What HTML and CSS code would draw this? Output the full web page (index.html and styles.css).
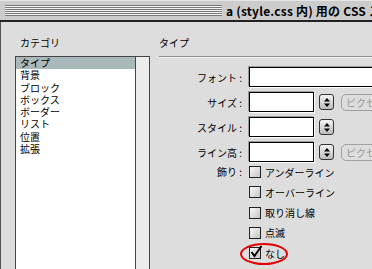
FILE: index.html
```html
<!DOCTYPE html>
<html lang="ja">
<head>
    <meta charset="UTF-8">
    <meta name="viewport" content="width=device-width, initial-scale=1.0">
    <title>CSS スタイル定義</title>
    <link rel="stylesheet" href="styles.css">
</head>
<body>
    <div class="window">
        <div class="titlebar">
            <div class="stripes"></div>
            <div class="title">a (style.css 内) 用の CSS スタイル定義</div>
        </div>

        <div class="content">
            <div class="category">
                <div class="heading">カテゴリ</div>
                <div class="listbox">
                    <ul class="list">
                        <li class="selected">タイプ</li>
                        <li>背景</li>
                        <li>ブロック</li>
                        <li>ボックス</li>
                        <li>ボーダー</li>
                        <li>リスト</li>
                        <li>位置</li>
                        <li>拡張</li>
                    </ul>
                    <div class="scrollbar"></div>
                </div>
            </div>

            <div class="panel">
                <div class="heading">タイプ</div>
                <div class="groove"></div>

                <div class="row">
                    <label class="label">フォント :</label>
                    <div class="field wide"></div>
                </div>
                <div class="row">
                    <label class="label">サイズ :</label>
                    <div class="field"></div>
                    <div class="stepper">
                        <svg width="8" height="11" viewBox="0 0 8 11"><path d="M4 1 L7 4.5 L1 4.5 Z M1 6.5 L7 6.5 L4 10 Z" fill="#000"/></svg>
                    </div>
                    <div class="unit">ピクセル</div>
                </div>
                <div class="row">
                    <label class="label">スタイル :</label>
                    <div class="field"></div>
                    <div class="stepper">
                        <svg width="8" height="11" viewBox="0 0 8 11"><path d="M4 1 L7 4.5 L1 4.5 Z M1 6.5 L7 6.5 L4 10 Z" fill="#000"/></svg>
                    </div>
                </div>
                <div class="row">
                    <label class="label">ライン高 :</label>
                    <div class="field"></div>
                    <div class="stepper">
                        <svg width="8" height="11" viewBox="0 0 8 11"><path d="M4 1 L7 4.5 L1 4.5 Z M1 6.5 L7 6.5 L4 10 Z" fill="#000"/></svg>
                    </div>
                    <div class="unit">ピクセル</div>
                </div>

                <div class="deco">
                    <label class="label deco-label">飾り :</label>
                    <div class="checks">
                        <div class="check"><span class="box"></span>アンダーライン</div>
                        <div class="check"><span class="box"></span>オーバーライン</div>
                        <div class="check"><span class="box"></span>取り消し線</div>
                        <div class="check"><span class="box"></span>点滅</div>
                        <div class="check">
                            <span class="box">
                                <svg class="tick" width="14" height="14" viewBox="0 0 14 14"><path d="M2.5 7 L5.5 11 L12.5 1" fill="none" stroke="#000" stroke-width="2"/></svg>
                            </span>なし
                            <span class="circle"></span>
                        </div>
                    </div>
                </div>
            </div>
        </div>
    </div>
</body>
</html>
```

FILE: styles.css
```css
body {
    margin: 0;
    padding: 0;
    width: 372px;
    height: 269px;
    overflow: hidden;
    font-family: "Noto Sans CJK JP", sans-serif;
    font-size: 10px;
    color: #000;
    background-color: #dddddd;
}

.window {
    height: 269px;
    display: flex;
    flex-direction: column;
}

.titlebar {
    flex-shrink: 0;
    display: flex;
    align-items: center;
    background-color: #cccccc;
    border-top: 1px solid #e6e6e6;
    border-bottom: 2px solid #222;
    box-sizing: border-box;
    height: 22px;
    padding-left: 5px;
    overflow: hidden;
}

.stripes {
    flex-shrink: 0;
    width: 217px;
    height: 11px;
    background: repeating-linear-gradient(to bottom, #7a7a7a 0, #7a7a7a 1px, #f2f2f2 1px, #f2f2f2 2px);
}

.title {
    margin-left: 4px;
    white-space: nowrap;
    font-size: 12px;
    font-weight: bold;
    letter-spacing: 0.2px;
}

.content {
    flex: 1;
    display: flex;
    border-left: 1px solid #555;
    min-height: 0;
}

.heading {
    padding-top: 15px;
    line-height: 12px;
    height: 12px;
    margin-bottom: 7px;
}

.category {
    flex-shrink: 0;
    margin-left: 14px;
    width: 135px;
    display: flex;
    flex-direction: column;
}

.category .heading {
    padding-left: 5px;
}

.listbox {
    flex: 1;
    display: flex;
    border: 1px solid #444;
    border-bottom: none;
}

.list {
    flex: 1;
    margin: 0;
    padding: 0;
    list-style: none;
    background-color: #fff;
    border-right: 1px solid #444;
}

.list li {
    line-height: 12.3px;
    padding-left: 4px;
    white-space: nowrap;
}

.list li.selected {
    background-color: #a9b8b8;
}

.scrollbar {
    width: 13px;
    background-color: #ececec;
}

.panel {
    flex: 1;
    min-width: 0;
    margin-left: 9px;
    overflow: hidden;
}

.groove {
    height: 1px;
    background-color: #8c8c8c;
    border-bottom: 1px solid #f4f4f4;
    margin-bottom: 9px;
}

.row {
    display: flex;
    align-items: center;
    height: 20px;
    margin-bottom: 5px;
    padding-left: 1px;
}

.label {
    width: 82px;
    margin-right: 7px;
    text-align: right;
    flex-shrink: 0;
    white-space: nowrap;
}

.field {
    width: 63px;
    height: 18px;
    background-color: #fff;
    border: 1px solid #000;
    box-shadow: -1px -1px 0 #9a9a9a, 1px 1px 0 #fff;
    flex-shrink: 0;
}

.field.wide {
    width: 200px;
}

.stepper {
    margin-left: 5px;
    width: 13px;
    height: 14px;
    border: 1px solid #333;
    border-radius: 3px;
    background: linear-gradient(to bottom, #f4f4f4, #bcbcbc);
    display: flex;
    align-items: center;
    justify-content: center;
    flex-shrink: 0;
}

.unit {
    margin-left: 7px;
    height: 15px;
    line-height: 15px;
    padding: 0 4px;
    border: 1px solid #a0a0a0;
    border-radius: 5px;
    color: #9a9a9a;
    white-space: nowrap;
}

.deco {
    display: flex;
    margin-top: -5px;
    padding-left: 1px;
}

.deco-label {
    line-height: 20px;
}

.check {
    position: relative;
    display: flex;
    align-items: center;
    height: 20.25px;
    white-space: nowrap;
}

.box {
    position: relative;
    width: 10px;
    height: 10px;
    margin-right: 4px;
    border: 1px solid #222;
    background: linear-gradient(135deg, #fafafa, #c4c4c4);
}

.tick {
    position: absolute;
    left: -1px;
    top: -3px;
}

.circle {
    position: absolute;
    left: -9px;
    top: 0;
    width: 44px;
    height: 18px;
    border: 2px solid #e00000;
    border-radius: 50%;
}
```
